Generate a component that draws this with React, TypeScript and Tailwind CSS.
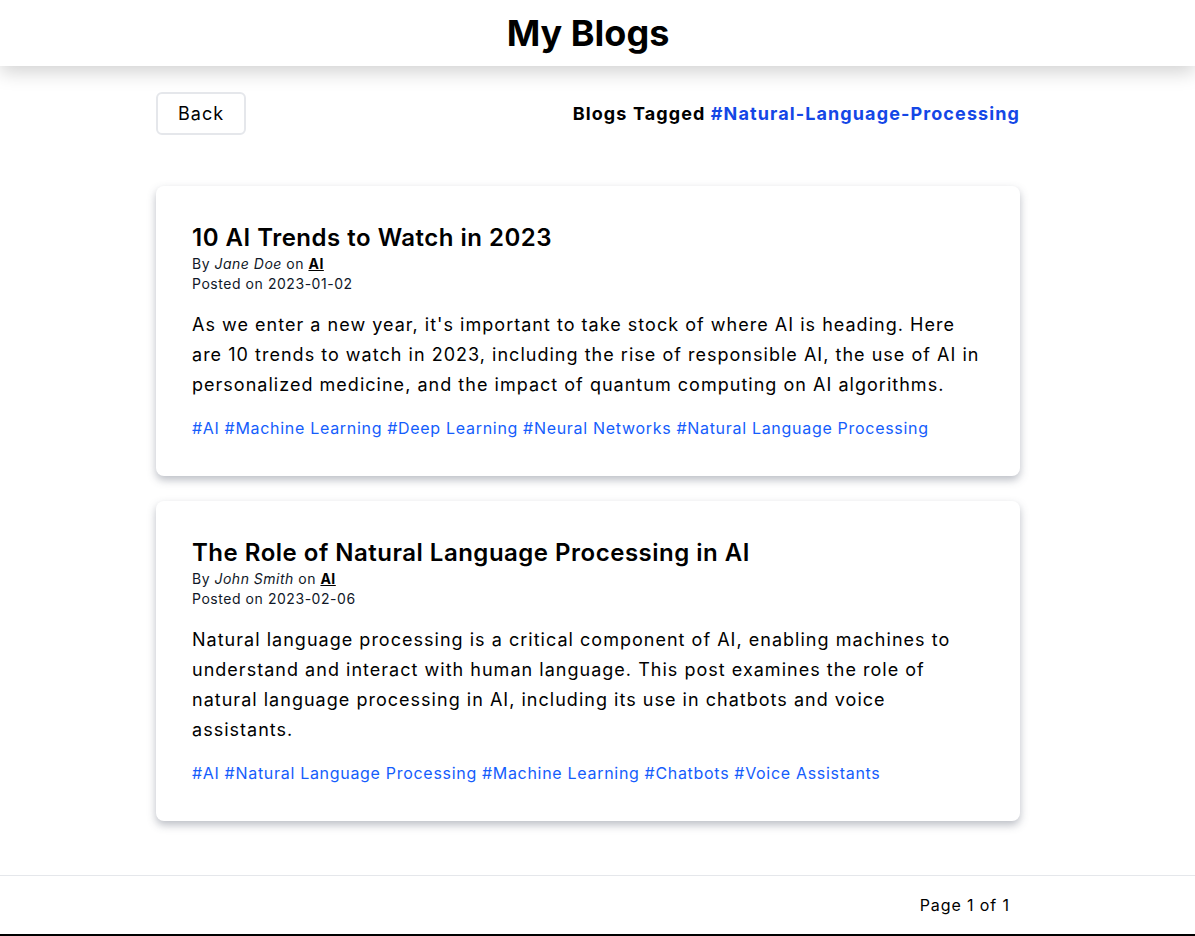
import React from 'react';

type Post = {
  title: string;
  author: string;
  category: string;
  date: string;
  body: string;
  tags: string[];
};

const posts: Post[] = [
  {
    title: '10 AI Trends to Watch in 2023',
    author: 'Jane Doe',
    category: 'AI',
    date: '2023-01-02',
    body: "As we enter a new year, it's important to take stock of where AI is heading. Here are 10 trends to watch in 2023, including the rise of responsible AI, the use of AI in personalized medicine, and the impact of quantum computing on AI algorithms.",
    tags: ['AI', 'Machine Learning', 'Deep Learning', 'Neural Networks', 'Natural Language Processing'],
  },
  {
    title: 'The Role of Natural Language Processing in AI',
    author: 'John Smith',
    category: 'AI',
    date: '2023-02-06',
    body: 'Natural language processing is a critical component of AI, enabling machines to understand and interact with human language. This post examines the role of natural language processing in AI, including its use in chatbots and voice assistants.',
    tags: ['AI', 'Natural Language Processing', 'Machine Learning', 'Chatbots', 'Voice Assistants'],
  },
];

function BlogCard({ post }: { post: Post }) {
  return (
    <div className="bg-white rounded-lg shadow-[0_4px_8px_rgba(60,70,90,0.35)] p-9">
      <h2 className="text-2xl font-semibold text-black leading-8 tracking-[0.5px]">{post.title}</h2>
      <p className="text-sm text-gray-900 leading-5 tracking-[0.5px]">
        By <em>{post.author}</em> on{' '}
        <a href="#" className="font-bold underline text-black">
          {post.category}
        </a>
      </p>
      <p className="text-sm text-gray-900 leading-5 tracking-[0.55px]">Posted on {post.date}</p>
      <p className="mt-4 text-lg leading-[30px] text-black tracking-[1.02px]">{post.body}</p>
      <div className="mt-4 text-base leading-6 text-blue-600 tracking-[0.7px]">
        {post.tags.map((t, i) => (
          <a key={t} href="#" className={i > 0 ? 'ml-[5px]' : ''}>
            #{t}
          </a>
        ))}
      </div>
    </div>
  );
}

export default function App() {
  return (
    <div className="min-h-screen flex flex-col bg-white font-['Inter',sans-serif] text-black">
      <header className="relative z-10 h-[66px] bg-white flex items-center justify-center pr-[19px] shadow-[0_6px_18px_rgba(0,0,0,0.18)]">
        <h1 className="text-4xl font-bold">My Blogs</h1>
      </header>

      <main className="flex-1 ml-[156px] w-[864px] pt-[26px]">
        <div className="flex items-center justify-between">
          <button className="h-[43px] px-5 border-2 border-gray-200 rounded-md text-lg tracking-[1px]">Back</button>
          <h3 className="text-lg font-bold tracking-[1.1px]">
            Blogs Tagged <span className="text-blue-700">#Natural-Language-Processing</span>
          </h3>
        </div>

        <div className="mt-[51px] flex flex-col gap-[25px]">
          {posts.map((p) => (
            <BlogCard key={p.title} post={p} />
          ))}
        </div>
      </main>

      <footer className="mt-[54px] border-t border-gray-200 h-[61px] flex items-center justify-end pr-[185px] border-b-2 border-b-black">
        <span className="text-base tracking-[0.9px]">Page 1 of 1</span>
      </footer>
    </div>
  );
}
